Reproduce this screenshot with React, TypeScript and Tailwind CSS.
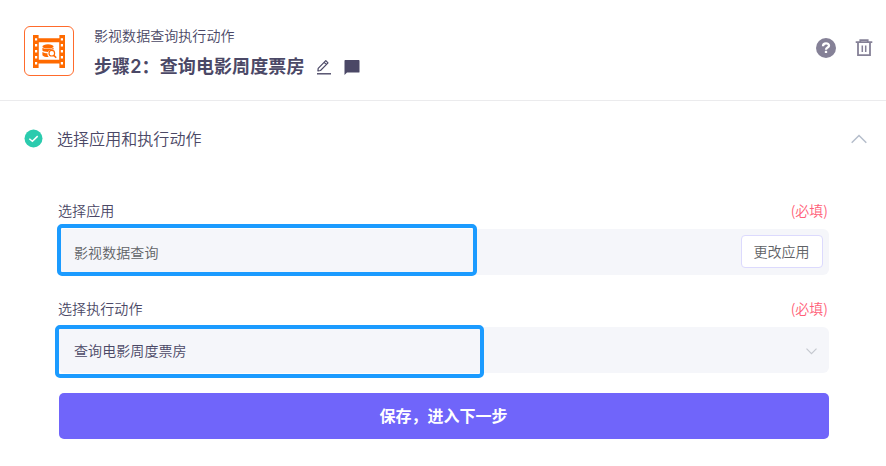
import React from "react";

function FilmIcon() {
  return (
    <svg className="mt-px" width="32" height="33" viewBox="0 0 32 33" fill="none">
      <path fill="#ff6a00" fillRule="evenodd" d="M0 0H5.6V3.2H26.4V0H32V33H26.4V28.6H5.6V33H0ZM5.8 7.2V24.8H26.2V7.2ZM2 3.2V5.6H4.2V3.2ZM2 9V11.6H4.2V9ZM2 15V17.6H4.2V15ZM2 21V23.6H4.2V21ZM2 27V29.4H4.2V27ZM27.8 3.2V5.6H30V3.2ZM27.8 9V11.6H30V9ZM27.8 15V17.6H30V15ZM27.8 21V23.6H30V21ZM27.8 27V29.4H30V27Z" />
      <ellipse cx="15" cy="11.4" rx="5.6" ry="2.1" fill="#ff6a00" />
      <path fill="#ff6a00" d="M9.4 12.8C11.4 14.4 18.6 14.4 20.6 12.8V14.6C17.6 14.5 15.8 15.3 15 17C12.5 17 10.3 16.7 9.4 15.6ZM9.4 17C10.8 18 12.5 18.2 14.4 18.3C14.3 19.8 14.7 21 15.8 22C13 22.1 10.3 21.6 9.4 20.2Z" />
      <circle cx="18.8" cy="18.2" r="2.8" stroke="#ff6a00" strokeWidth="1.2" />
      <path d="M20.8 20.4L23.2 22.8" stroke="#ff6a00" strokeWidth="1.5" />
    </svg>
  );
}

function Label({ children }: { children: React.ReactNode }) {
  return (
    <div className="flex h-5 items-center justify-between pr-px text-sm leading-5">
      <span className="tracking-[0.08px]">{children}</span>
      <span className="text-[#ff5f79]">(必填)</span>
    </div>
  );
}

export default function App() {
  return (
    <div className="h-[466px] w-[886px] overflow-hidden bg-white font-['Noto_Sans_CJK_SC','Liberation_Sans',sans-serif] text-[#4b4866]">
      <header className="flex h-[101px] items-start border-b border-[#ebebed] pl-6 pr-[13px]">
        <div className="mt-[26px] flex size-[50px] items-center justify-center rounded-md border border-[#ff6b2c]">
          <FilmIcon />
        </div>
        <div className="ml-5 mt-[25px]">
          <div className="text-sm leading-5 font-[350] tracking-[0.05px]">影视数据查询执行动作</div>
          <div className="mt-[7px] flex h-7 items-center">
            <h1 className="text-lg leading-7 font-bold tracking-[0.11px]">
              步骤<span className="font-['Inter'] font-semibold">2</span>：查询电影周度票房
            </h1>
            <svg className="ml-[11px] mt-px" width="16" height="16" viewBox="0 0 16 16" fill="none" stroke="currentColor">
              <path d="M2.2 9.4L9.8 1.7L12 3.9L4.5 11.5L1.9 12ZM8.2 3.4L10.4 5.6" strokeWidth="1.2" strokeLinejoin="round" />
              <path d="M1 14.8H15" strokeWidth="1.4" />
            </svg>
            <svg className="ml-3 mt-0.5" width="16" height="15" viewBox="0 0 16 15" fill="currentColor">
              <path d="M1.2 0H14.8Q15.5 0 15.5.7V12Q15.5 12.6 14.8 12.6H3L.5 15V.7Q.5 0 1.2 0Z" />
            </svg>
          </div>
        </div>
        <div className="ml-auto mt-[38px] flex items-center gap-[19px] text-[#858197]">
          <span className="flex size-5 items-center justify-center rounded-full bg-[#858197]">
            <svg width="12" height="14" viewBox="0 0 12 14" fill="none" stroke="white" strokeWidth="2.3">
              <path d="M3 5.2C3 1.4 9 1.4 9 4.8C9 6.7 6 6.5 6 8.7" />
              <path d="M6 9.8V12" />
            </svg>
          </span>
          <svg width="18" height="18" viewBox="0 0 18 18" fill="none" stroke="currentColor">
            <path d="M.7 3.2H17.3M5.3 2.2V1.2H12.7V2.2" strokeWidth="1.8" />
            <path d="M3 3.5V16.2H15V3.5" strokeWidth="1.8" />
            <path d="M7.3 6.5V13M10.7 6.5V13" strokeWidth="1.5" />
          </svg>
        </div>
      </header>

      <section>
        <div className="mt-[25px] flex h-6 items-center pl-6 pr-[19px]">
          <svg width="19" height="19" viewBox="0 0 19 19" fill="none">
            <circle cx="9.5" cy="9.5" r="9" fill="#2bcbae" />
            <path d="M5.3 9.7L8.4 12.3L13.7 7.1" stroke="white" strokeWidth="1.5" />
          </svg>
          <h2 className="ml-[14px] text-base leading-6 font-[350] tracking-[0.06px]">选择应用和执行动作</h2>
          <svg className="ml-auto mt-0.5" width="16" height="10" viewBox="0 0 16 10" fill="none" stroke="#b5bdcb" strokeWidth="1.5">
            <path d="M.7 8.8L8 1.5L15.3 8.8" />
          </svg>
        </div>

        <div className="ml-[58px] mr-[57px] mt-[50px] font-[350]">
          <Label>选择应用</Label>
          <div className="relative ml-px mt-[9px] flex h-[46px] items-center justify-between rounded-md bg-[#f5f6fa] pl-[15px] pr-1.5 text-sm text-[#606266]">
            <span className="tracking-[0.08px]">影视数据查询</span>
            <button className="mb-px h-[33px] w-[82px] rounded border border-[#dcdafd] bg-white pr-px pb-0.5 text-sm leading-5 text-[#606266]">更改应用</button>
            <div className="pointer-events-none absolute -left-[2px] -top-[5px] h-[52px] w-[420px] rounded-[5px] border-4 border-[#1b9bff]" />
          </div>

          <div className="mt-[23px]">
            <Label>选择执行动作</Label>
          </div>
          <div className="relative ml-px mt-[9px] flex h-[46px] items-center justify-between rounded-md bg-[#f5f6fa] pl-[15px] pr-3 text-sm">
            <span className="mb-px tracking-[0.08px]">查询电影周度票房</span>
            <svg className="mt-0.5" width="11" height="7" viewBox="0 0 11 7" fill="none" stroke="#c5c8cf" strokeWidth="1.2">
              <path d="M.5 .7L5.5 5.7L10.5 .7" />
            </svg>
            <div className="pointer-events-none absolute -left-[4px] -top-[2px] h-[53px] w-[429px] rounded-[5px] border-4 border-[#1b9bff]" />
          </div>
          <button className="ml-px mt-5 flex h-[46px] w-[770px] items-center justify-center rounded-[5px] bg-[#7065fa] pb-0.5 pr-px text-base leading-6 font-bold text-white">
            保存，进入下一步
          </button>
        </div>
      </section>
    </div>
  );
}
